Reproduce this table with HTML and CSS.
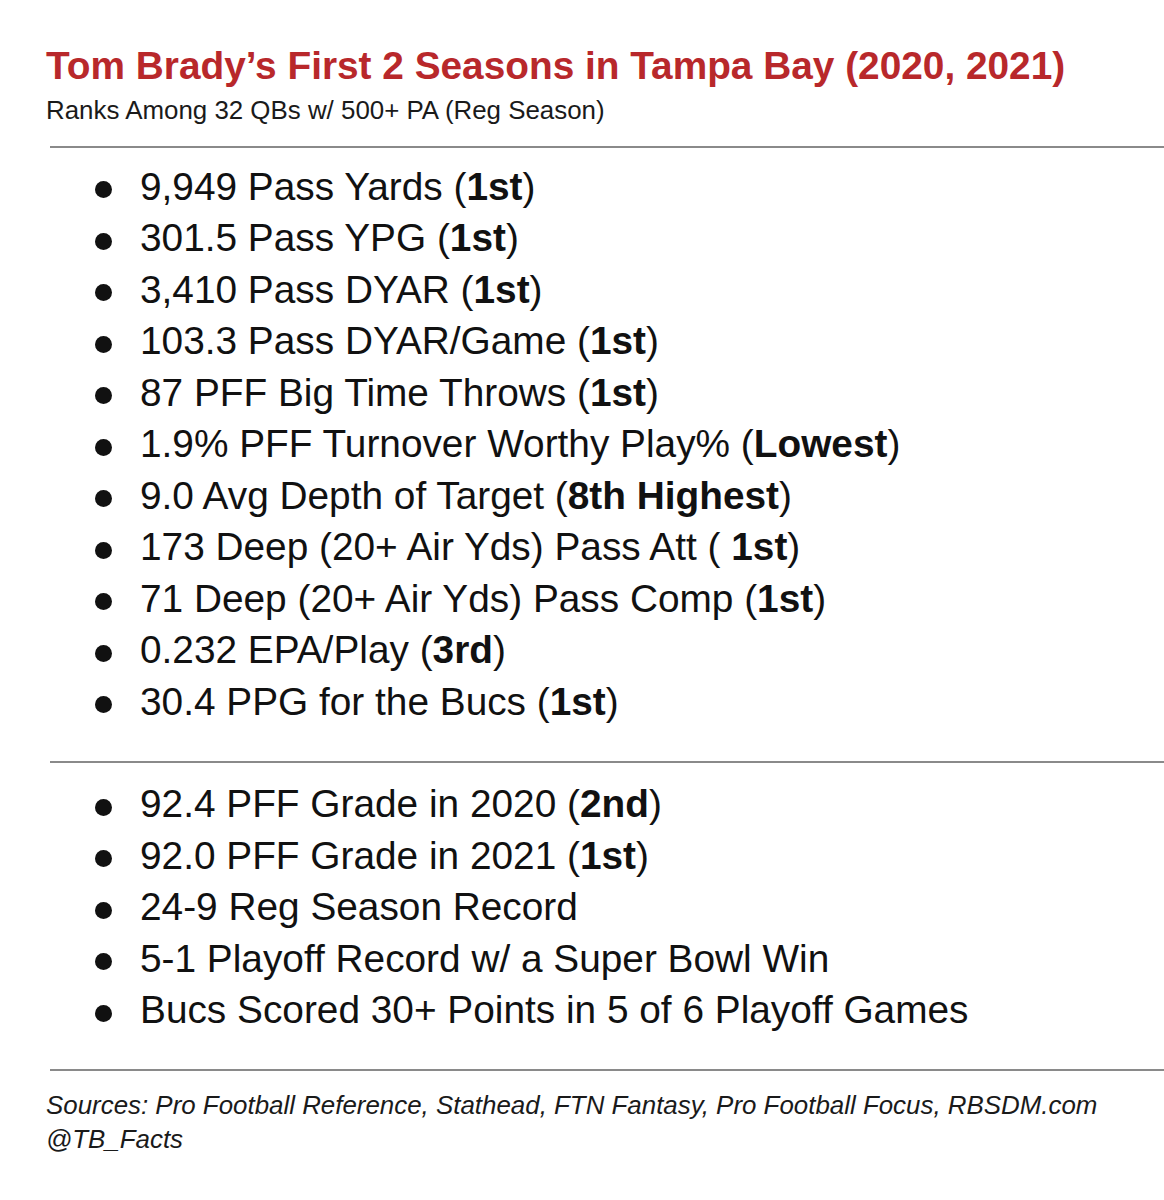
FILE: index.html
```html
<!DOCTYPE html>
<html>
<head>
<meta charset="utf-8">
<link rel="stylesheet" href="styles.css">
</head>
<body>
<div class="page">
  <header class="head">
    <h1 class="title">Tom Brady’s First 2 Seasons in Tampa Bay (2020, 2021)</h1>
    <p class="subtitle">Ranks Among 32 QBs w/ 500+ PA (Reg Season)</p>
  </header>
  <hr class="rule">
  <ul class="list list-a">
    <li><span class="dot"></span><span>9,949 Pass Yards (<b>1st</b>)</span></li>
    <li><span class="dot"></span><span>301.5 Pass YPG (<b>1st</b>)</span></li>
    <li><span class="dot"></span><span>3,410 Pass DYAR (<b>1st</b>)</span></li>
    <li><span class="dot"></span><span>103.3 Pass DYAR/Game (<b>1st</b>)</span></li>
    <li><span class="dot"></span><span>87 PFF Big Time Throws (<b>1st</b>)</span></li>
    <li><span class="dot"></span><span>1.9% PFF Turnover Worthy Play% (<b>Lowest</b>)</span></li>
    <li><span class="dot"></span><span>9.0 Avg Depth of Target (<b>8th Highest</b>)</span></li>
    <li><span class="dot"></span><span>173 Deep (20+ Air Yds) Pass Att ( <b>1st</b>)</span></li>
    <li><span class="dot"></span><span>71 Deep (20+ Air Yds) Pass Comp (<b>1st</b>)</span></li>
    <li><span class="dot"></span><span>0.232 EPA/Play (<b>3rd</b>)</span></li>
    <li><span class="dot"></span><span>30.4 PPG for the Bucs (<b>1st</b>)</span></li>
  </ul>
  <hr class="rule">
  <ul class="list list-b">
    <li><span class="dot"></span><span>92.4 PFF Grade in 2020 (<b>2nd</b>)</span></li>
    <li><span class="dot"></span><span>92.0 PFF Grade in 2021 (<b>1st</b>)</span></li>
    <li><span class="dot"></span><span>24-9 Reg Season Record</span></li>
    <li><span class="dot"></span><span>5-1 Playoff Record w/ a Super Bowl Win</span></li>
    <li><span class="dot"></span><span>Bucs Scored 30+ Points in 5 of 6 Playoff Games</span></li>
  </ul>
  <hr class="rule">
  <footer class="foot">
    <p>Sources: Pro Football Reference, Stathead, FTN Fantasy, Pro Football Focus, RBSDM.com</p>
    <p>@TB_Facts</p>
  </footer>
</div>
</body>
</html>
```

FILE: styles.css
```css
html, body {
  margin: 0;
  padding: 0;
  background: #ffffff;
}
body {
  font-family: "Liberation Sans", Arial, sans-serif;
  color: #111111;
  width: 1164px;
  height: 1200px;
  overflow: hidden;
}
.page {
  display: flex;
  flex-direction: column;
  padding-top: 44px;
}
.head {
  padding-left: 46px;
}
.title {
  margin: 0;
  font-size: 38.8px;
  line-height: 44px;
  font-weight: 700;
  color: #b8282b;
  white-space: nowrap;
}
.subtitle {
  margin: 7px 0 0 0;
  font-size: 25.9px;
  line-height: 30px;
  color: #1a1a1a;
  white-space: nowrap;
}
.rule {
  margin: 0 0 0 50px;
  border: 0;
  height: 2px;
  background: #8a8a8a;
}
.head + .rule {
  margin-top: 21px;
}
.list {
  list-style: none;
  margin: 0;
  padding: 0 0 0 93px;
}
.list-a {
  padding-top: 13px;
  padding-bottom: 33px;
}
.list-b {
  padding-top: 16px;
  padding-bottom: 33px;
}
.list li {
  display: flex;
  align-items: center;
  height: 51.5px;
  font-size: 38.8px;
  color: #111111;
  white-space: nowrap;
}
.list b {
  font-weight: 700;
}
.dot {
  flex: none;
  width: 17px;
  height: 17px;
  border-radius: 50%;
  background: #111111;
  margin: 6px 28px 0 2px;
}
.foot {
  padding: 17px 0 0 46px;
}
.foot p {
  margin: 0;
  font-style: italic;
  font-size: 25.9px;
  line-height: 34px;
  color: #1a1a1a;
  white-space: nowrap;
}
```
